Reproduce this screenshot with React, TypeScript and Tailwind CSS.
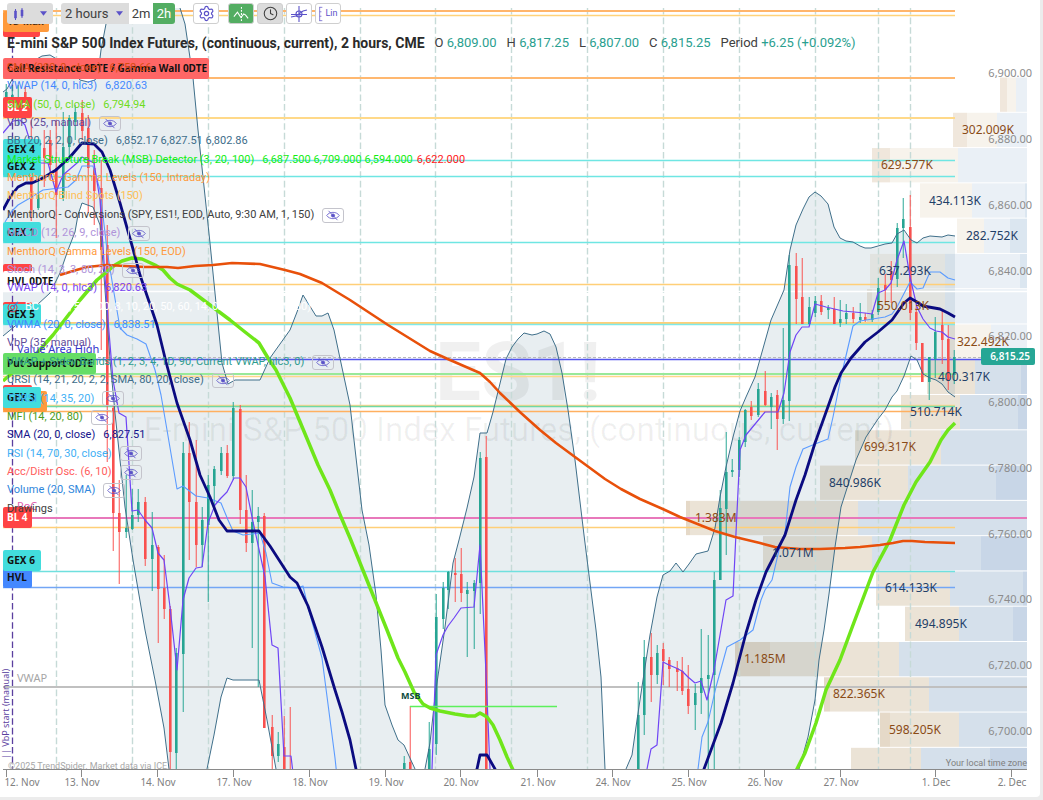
import { clsx } from "clsx"
import { Clock, Settings } from "lucide-react"

type Point = [number, number]
type Candle = [x: number, high: number, low: number, top: number, bottom: number, up: 0 | 1]
type Tag = { text: string, y: number, w: number, fill: string, color?: string }
type Row = { name: string, color: string, values?: string, last?: string, hidden?: boolean, target?: boolean }

const LEGEND: Row[] = [
    { name: "SMA (200, 0, close)", values: "6,759.66", color: "text-[#d94a10]" },
    { name: "VWAP (14, 0, hlc3)", values: "6,820.63", color: "text-[#4488ff]" },
    { name: "SMA (50, 0, close)", values: "6,794.94", color: "text-[#6fdc1c]" },
    { name: "VbP (25, manual)", color: "text-[#5f4b9b]", hidden: true },
    { name: "BB (20, 2, 2, 0, close)", values: "6,852.17 6,827.51 6,802.86", color: "text-[#3d6d8a]" },
    { name: "Market Structure Break (MSB) Detector (3, 20, 100)", values: "6,687.500 6,709.000 6,594.000", last: "6,622.000", color: "text-[#11ee11]" },
    { name: "MenthorQ - Gamma Levels (150, Intraday)", color: "text-[#ff9a3c]" },
    { name: "MenthorQ Blind Spots (150)", color: "text-[#ffbe55]" },
    { name: "MenthorQ - Conversions (SPY, ES1!, EOD, Auto, 9:30 AM, 1, 150)", color: "text-[#404040]", hidden: true },
    { name: "MACD (12, 26, 9, close)", color: "text-[#b094da]", hidden: true },
    { name: "MenthorQ Gamma Levels (150, EOD)", color: "text-[#ff9a3c]" },
    { name: "Stoch (14, 3, 3, 80, 20)", color: "text-[#b094da]", hidden: true },
    { name: "VWAP (14, 0, hlc3)", values: "6,820.63", color: "text-[#7a44f0]" },
    { name: "BC (5, 20, 50, 200, 8, 10, 20, 50, 60, 14, 0.8, 5, 14, 70, 30, 30)", color: "text-white", target: true },
    { name: "VWMA (20, 0, close)", values: "6,838.51", color: "text-[#4488ff]" },
    { name: "VbP (35, manual)", color: "text-[#5f4b9b]" },
    { name: "VWAP + Stdev Bands (1, 2, 3, 4, 1D, 90, Current VWAP, hlc3, 0)", color: "text-[#2f9c8e]", hidden: true },
    { name: "URSI (14, 21, 20, 2, 2, SMA, 80, 20, close)", color: "text-[#3d6d8a]", hidden: true },
    { name: "TDRSI (14, 35, 20)", color: "text-[#3fb0f5]", hidden: true },
    { name: "MFI (14, 20, 80)", color: "text-[#4d9c1c]", hidden: true },
    { name: "SMA (20, 0, close)", values: "6,827.51", color: "text-[#14148c]" },
    { name: "RSI (14, 70, 30, close)", color: "text-[#3fb0f5]", hidden: true },
    { name: "Acc/Distr Osc. (6, 10)", color: "text-[#ff5c5c]", hidden: true },
    { name: "Volume (20, SMA)", color: "text-[#2f86dc]", hidden: true },
    { name: "Drawings", color: "text-[#404040]" },
]

const QUOTE = [
    ["O", "6,809.00"],
    ["H", "6,817.25"],
    ["L", "6,807.00"],
    ["C", "6,815.25"],
    ["Period", "+6.25 (+0.092%)"],
]

const TAGS: Tag[] = [
    { text: "", y: 16, w: 37, fill: "#ff4444" },
    { text: "1D Max", y: 11, w: 46, fill: "#ff9a3c", color: "#553010" },
    { text: "Call Resistance 0DTE / Gamma Wall 0DTE", y: 58, w: 206, fill: "#ff6666" },
    { text: "BL 2", y: 97, w: 29, fill: "#ff4444", color: "#ffffff" },
    { text: "GEX 4", y: 139, w: 38, fill: "#42dddd" },
    { text: "GEX 2", y: 156, w: 38, fill: "#42dddd" },
    { text: "GEX 1", y: 222, w: 38, fill: "#42dddd" },
    { text: "", y: 264, w: 29, fill: "#ff4444" },
    { text: "HVL 0DTE", y: 271, w: 51, fill: "#ffffff" },
    { text: "", y: 302, w: 29, fill: "#ff4444" },
    { text: "GEX 5", y: 304, w: 38, fill: "#42dddd" },
    { text: "Put Support 0DTE", y: 353, w: 93, fill: "#66dd66" },
    { text: "", y: 385, w: 29, fill: "#ff4444" },
    { text: "", y: 391, w: 44, fill: "#ff9a3c" },
    { text: "GEX 3", y: 387, w: 38, fill: "#42dddd" },
    { text: "BL 4", y: 507, w: 29, fill: "#ff4444", color: "#ffffff" },
    { text: "HVL", y: 567, w: 29, fill: "#4488ff" },
    { text: "GEX 6", y: 550, w: 38, fill: "#42dddd" },
]

// [y, colour, thickness, right end]
const LEVELS: [number, string, number, number][] = [
    [11, "#ffb56b", 2, 955], [15, "#ffd37a", 1, 955], [78, "#ffb870", 2, 955], [118, "#ffd989", 2, 955],
    [160, "#6fe6e3", 1, 955], [176, "#6fe6e3", 1, 955], [242, "#6fe6e3", 1, 955], [284, "#ffcf78", 1, 955],
    [291, "#ffffff", 1, 1027], [323, "#ffcf78", 2, 955], [324, "#7fe9e9", 1, 955], [359, "#5555ee", 1, 981],
    [374, "#98e99a", 2, 955], [376, "#ffd68c", 1, 955], [405, "#ffd68c", 1, 955], [406, "#70d8a4", 1, 955],
    [411, "#ffb060", 1, 955], [518, "#e878bb", 2, 1027], [527, "#ffcf78", 1, 955], [571, "#6fe0de", 1, 955],
    [587, "#73a6f5", 1, 955], [687, "#c0c0c0", 2, 1027],
]

const SESSIONS = [56, 132, 208, 284, 360, 435, 511, 587, 663, 739, 815, 878, 910]

// volume by price rows, top to bottom: [left edge, colour][]
const BL = "#f7f3ec", BD = "#f0e7dc", UL = "#eaf0f6", UD = "#dbe6f0"
const SL = "#ebe3d6", SD = "#e5d9c8", CL = "#d5e0eb", CD = "#c8d6e7"
const PROFILE: [number, string][][] = [
    [[1000, BD], [1007, BL], [1016, UL]],
    [[953, BD], [967, BL], [997, UL]],
    [[872, BD], [890, BL], [958, UL]],
    [[920, BL], [972, UL], [1025, UD]],
    [[957, BL], [984, UL], [1010, UD]],
    [[870, BL], [945, UL], [1020, UD]],
    [[867, BD], [872, BL], [945, UL]],
    [[948, BD], [955, BL], [991, UL]],
    [[927, SL], [975, CL], [1021, CD]],
    [[901, SL], [960, CL], [1018, CD]],
    [[855, SL], [941, CL]],
    [[820, SL], [908, CL], [996, CD]],
    [[686, SD], [690, SL], [858, CL]],
    [[763, SL], [872, CL], [981, CD]],
    [[876, SL], [950, CL], [1023, CD]],
    [[905, SL], [959, CL], [1013, CD]],
    [[735, SD], [770, SL], [899, CL]],
    [[824, SD], [830, SL], [929, CL]],
    [[880, SD], [890, SL], [959, CL]],
    [[851, SL], [921, CL], [990, CD]],
]

const VOLUMES: [number, number, string, 0 | 1][] = [
    [962, 130, "302.009K", 0], [881, 165, "629.577K", 0], [929, 201, "434.113K", 1], [966, 236, "282.752K", 1],
    [879, 271, "637.293K", 1], [877, 306, "550.013K", 0], [957, 342, "322.492K", 0], [938, 377, "400.317K", 1],
    [910, 412, "510.714K", 1], [864, 447, "699.317K", 0], [829, 483, "840.986K", 1], [695, 518, "1.383M", 0],
    [772, 553, "1.071M", 1], [885, 588, "614.133K", 1], [915, 624, "494.895K", 1], [744, 659, "1.185M", 0],
    [833, 694, "822.365K", 0], [889, 730, "598.205K", 0],
]

const PRICES: [number, string][] = [
    [73, "6,900.00"], [139, "6,880.00"], [205, "6,860.00"], [271, "6,840.00"], [336, "6,820.00"], [402, "6,800.00"],
    [468, "6,780.00"], [534, "6,760.00"], [599, "6,740.00"], [665, "6,720.00"], [731, "6,700.00"],
]

const DATES: [number, string][] = [
    [6, "12. Nov"], [81, "13. Nov"], [157, "14. Nov"], [233, "17. Nov"], [309, "18. Nov"], [385, "19. Nov"], [460, "20. Nov"],
    [537, "21. Nov"], [612, "24. Nov"], [688, "25. Nov"], [764, "26. Nov"], [840, "27. Nov"], [935, "1. Dec"], [1011, "2. Dec"],
]

const UPPER: Point[] = [
    [3, 92], [7, 89], [14, 76], [24, 66], [35, 60], [42, 56], [50, 55], [55, 58], [68, 66], [80, 80], [88, 82], [95, 80], [98, 74],
    [101, 50], [106, 24], [110, -10], [174, -10], [180, 8], [185, 24], [193, 78], [198, 130], [210, 243], [222, 363], [228, 384],
    [235, 380], [260, 380], [270, 358], [290, 330], [297, 312], [303, 295], [316, 316], [322, 316], [328, 313], [334, 330],
    [341, 363], [350, 405], [354, 440], [362, 510], [369, 545], [376, 595], [381, 650], [385, 705], [392, 725], [398, 740], [404, 745],
    [415, 769], [420, 800], [425, 769], [430, 743], [435, 697], [445, 627], [453, 563], [459, 540], [467, 508], [474, 477], [480, 433], [487, 433],
    [493, 412], [506, 359], [512, 347], [518, 339], [524, 333], [532, 335], [537, 334], [544, 331], [550, 334], [556, 347],
    [562, 373], [568, 410], [575, 460], [584, 535], [590, 583], [596, 630], [601, 677], [605, 769], [612, 850], [618, 850],
    [626, 769], [632, 755], [637, 720], [643, 680], [650, 635], [657, 597], [663, 575], [670, 571], [676, 563], [683, 572],
    [689, 564], [696, 554], [708, 551], [715, 528], [720, 497], [726, 467], [733, 437], [740, 411], [746, 397], [755, 377],
    [771, 320], [784, 290], [790, 250], [796, 225], [803, 209], [809, 197], [815, 192], [821, 196], [828, 204], [834, 227],
    [840, 238], [846, 241], [853, 242], [860, 246], [865, 248], [871, 248], [885, 244], [892, 243], [897, 234], [904, 230],
    [911, 240], [917, 243], [923, 238], [930, 236], [942, 237], [948, 235], [955, 236],
]

const LOWER: Point[] = [
    [3, 336], [20, 322], [37, 305], [50, 293], [60, 273], [68, 250], [75, 232], [78, 215], [82, 203], [93, 207], [100, 225],
    [105, 290], [110, 360], [115, 413], [125, 507], [133, 560], [145, 630], [155, 680], [164, 728], [169, 769], [180, 900],
    [190, 900], [207, 769], [214, 735], [221, 697], [227, 678], [233, 680], [259, 680], [267, 720], [276, 769], [300, 900],
    [770, 900], [799, 769], [808, 737], [815, 700], [819, 660], [824, 630], [829, 594], [835, 547], [841, 507], [856, 460],
    [866, 437], [878, 419], [885, 410], [892, 397], [897, 391], [904, 376], [911, 356], [917, 360], [923, 374], [930, 378],
    [936, 380], [942, 384], [948, 392], [955, 397],
]

const SMA50: Point[] = [
    [3, 381], [20, 366], [37, 353], [53, 335], [80, 300], [97, 280], [115, 265], [122, 261], [132, 258], [142, 259], [155, 265],
    [163, 270], [170, 278], [177, 284], [190, 290], [210, 305], [230, 320], [245, 332], [259, 343], [268, 358], [276, 370],
    [290, 398], [303, 429], [318, 465], [330, 490], [341, 517], [350, 538], [387, 630], [398, 658], [405, 672], [414, 692],
    [423, 704], [430, 708], [440, 711], [455, 714], [468, 716], [475, 716], [480, 713], [487, 717], [493, 725], [500, 740],
    [507, 757], [520, 785], [600, 900], [720, 900], [790, 785], [797, 769], [805, 753], [816, 723], [826, 690], [840, 660], [853, 625],
    [873, 572], [890, 540], [904, 505], [916, 482], [930, 462], [941, 440], [948, 430], [955, 423],
]

const SMA200: Point[] = [
    [60, 275], [73, 271], [87, 267], [107, 265], [125, 266], [145, 267], [167, 267], [178, 268], [195, 266], [213, 265],
    [232, 263], [260, 264], [285, 270], [300, 274], [322, 283], [350, 300], [388, 325], [430, 351], [450, 360], [480, 373],
    [490, 382], [500, 393], [521, 413], [540, 430], [556, 443], [575, 457], [590, 468], [605, 479], [621, 489], [640, 499],
    [665, 510], [680, 517], [700, 525], [715, 531], [735, 537], [760, 543], [775, 547], [800, 549], [820, 549], [845, 548],
    [860, 547], [880, 545], [893, 543], [903, 541], [912, 541], [925, 542], [955, 543],
]

const SMA20: Point[] = [
    [3, 210], [10, 197], [18, 187], [26, 183], [32, 183], [43, 178], [56, 170], [70, 157], [82, 143], [94, 144], [102, 152],
    [110, 170], [120, 203], [133, 249], [140, 275], [157, 325], [166, 362], [177, 403], [190, 440], [200, 475], [210, 497],
    [219, 520], [227, 531], [259, 531], [270, 546], [290, 577], [297, 583], [308, 606], [322, 647], [335, 690],
    [342, 712], [350, 740], [356, 769], [370, 830], [460, 830], [477, 769], [480, 755], [487, 755], [495, 769], [520, 830],
    [680, 830], [704, 769], [721, 723], [733, 683], [746, 633], [756, 600], [766, 572], [785, 535], [796, 500], [805, 475],
    [815, 443], [835, 387], [841, 373], [851, 358], [865, 342], [878, 332], [892, 320], [904, 303], [910, 298],
    [917, 302], [923, 306], [940, 309], [948, 313], [955, 317],
]

const VWAP: Point[] = [
    [3, 133], [13, 121], [20, 120], [25, 125], [29, 138], [33, 163], [48, 163], [56, 192], [63, 175], [77, 163], [82, 157],
    [94, 163], [100, 200], [104, 262], [108, 320], [113, 380], [119, 413], [126, 417], [132, 511], [138, 510], [145, 520],
    [152, 528], [158, 553], [164, 560], [170, 607], [177, 670], [183, 600], [189, 578], [196, 568], [202, 567], [208, 523],
    [215, 505], [221, 498], [227, 492], [234, 478], [240, 478], [246, 487], [252, 517], [265, 577], [272, 645], [278, 648],
    [284, 756], [291, 756], [295, 790], [430, 850], [432, 769], [436, 655], [443, 635], [448, 626], [454, 618], [461, 608],
    [474, 607], [480, 545], [486, 673], [490, 769], [495, 850], [640, 850], [647, 769], [651, 749], [657, 745], [663, 662],
    [669, 665], [676, 668], [682, 671], [688, 677], [695, 683], [701, 681], [707, 700], [714, 670], [726, 600], [733, 596],
    [736, 533], [740, 450], [746, 435], [765, 412], [778, 412], [784, 393], [790, 352], [796, 335], [802, 327], [809, 327],
    [815, 304], [826, 307], [843, 311], [865, 313], [872, 314], [878, 293], [885, 290], [891, 283], [897, 260], [904, 241],
    [910, 277], [917, 307], [923, 319], [930, 328], [936, 331], [942, 332], [948, 337], [955, 339],
]

const VWMA: Point[] = [
    [5, 222], [12, 211], [18, 205], [30, 198], [43, 190], [68, 187], [76, 180], [82, 166], [93, 166], [100, 190], [107, 250],
    [113, 287], [120, 328], [127, 335], [137, 339], [146, 344], [155, 370], [161, 395], [167, 430], [177, 489], [183, 486],
    [196, 496], [208, 498], [221, 503], [228, 520], [233, 531], [243, 535], [260, 533], [266, 553], [272, 583], [283, 587],
    [297, 588], [303, 586], [308, 607], [322, 658], [335, 758], [345, 850], [690, 850], [698, 769], [702, 737], [708, 722],
    [716, 687], [727, 647], [740, 640], [753, 630], [761, 600], [765, 590], [772, 580], [779, 550], [785, 533], [790, 487],
    [796, 467], [803, 449], [815, 444], [828, 439], [833, 417], [841, 377], [853, 326], [860, 321], [885, 317], [892, 314],
    [897, 307], [910, 282], [917, 289], [923, 288], [930, 272], [940, 272], [948, 278], [955, 280],
]

const CANDLES: Candle[] = [
    [6, 84, 112, 92, 108, 1], [12, 86, 116, 95, 112, 1], [18, 85, 125, 100, 118, 1], [25, 86, 120, 92, 115, 0],
    [31, 120, 221, 150, 210, 0], [38, 150, 210, 195, 208, 1], [44, 130, 187, 148, 158, 0], [50, 130, 180, 140, 165, 0],
    [56, 120, 238, 168, 195, 0], [63, 112, 201, 147, 198, 1], [69, 115, 157, 118, 147, 1], [75, 105, 140, 112, 122, 1],
    [82, 100, 140, 113, 131, 0], [88, 115, 213, 128, 168, 0], [94, 150, 225, 168, 191, 0], [101, 160, 350, 188, 250, 0],
    [107, 225, 462, 245, 405, 0], [113, 405, 551, 408, 513, 0], [119, 480, 584, 513, 532, 0], [126, 475, 538, 528, 532, 1],
    [132, 489, 530, 515, 529, 1], [138, 489, 522, 502, 515, 1], [145, 497, 566, 502, 559, 0], [152, 512, 591, 545, 559, 1],
    [158, 545, 643, 547, 589, 0], [164, 555, 619, 588, 609, 0], [170, 606, 769, 609, 752, 0], [176, 648, 769, 653, 753, 1],
    [183, 442, 712, 453, 654, 1], [189, 422, 560, 453, 502, 0], [196, 440, 567, 502, 545, 0], [202, 507, 567, 520, 545, 1],
    [208, 475, 602, 485, 525, 1], [214, 466, 505, 469, 486, 1], [221, 447, 475, 453, 471, 1], [227, 445, 478, 453, 476, 0],
    [233, 402, 480, 408, 476, 1], [240, 405, 524, 409, 510, 0], [246, 475, 552, 510, 543, 0], [252, 490, 648, 522, 543, 1],
    [258, 507, 687, 516, 522, 1], [264, 513, 728, 516, 728, 0], [272, 715, 769, 727, 756, 0], [278, 732, 762, 744, 756, 1],
    [284, 716, 769, 747, 769, 0], [290, 707, 769, 769, 769, 0], [404, 756, 769, 763, 769, 1], [410, 706, 769, 762, 769, 0],
    [429, 722, 769, 749, 769, 1], [436, 594, 755, 617, 744, 1], [443, 582, 629, 588, 619, 1], [448, 571, 609, 572, 590, 1],
    [455, 558, 602, 573, 575, 0], [461, 548, 602, 574, 593, 0], [467, 582, 657, 590, 594, 1], [474, 580, 649, 583, 591, 1],
    [480, 452, 614, 458, 583, 1], [486, 436, 769, 457, 769, 0], [638, 682, 769, 715, 769, 1], [644, 640, 735, 657, 715, 1],
    [651, 633, 702, 657, 675, 0], [657, 645, 684, 653, 675, 1], [663, 643, 685, 649, 661, 0], [669, 657, 687, 660, 669, 0],
    [677, 661, 691, 668, 672, 0], [682, 657, 695, 671, 691, 0], [688, 665, 714, 689, 706, 0], [695, 684, 730, 693, 705, 1],
    [701, 629, 714, 678, 693, 1], [708, 635, 769, 675, 679, 1], [714, 572, 769, 580, 675, 1], [720, 490, 580, 508, 580, 1],
    [726, 432, 555, 472, 509, 1], [732, 459, 477, 470, 472, 1], [739, 437, 477, 440, 470, 1], [745, 409, 447, 410, 442, 1],
    [751, 401, 420, 407, 416, 0], [758, 383, 417, 389, 415, 1], [765, 371, 406, 391, 405, 0], [771, 393, 429, 397, 407, 1],
    [777, 390, 450, 395, 419, 0], [783, 328, 424, 400, 419, 1], [789, 255, 421, 265, 401, 1], [796, 253, 324, 266, 299, 0],
    [802, 258, 324, 297, 324, 0], [809, 297, 325, 307, 324, 1], [815, 296, 317, 301, 313, 1], [821, 295, 315, 301, 312, 0],
    [828, 305, 319, 308, 310, 1], [834, 297, 323, 309, 324, 0], [840, 300, 327, 319, 323, 1], [846, 304, 324, 313, 319, 1],
    [853, 307, 323, 313, 319, 0], [860, 303, 323, 317, 320, 1], [865, 313, 322, 317, 320, 0], [872, 310, 322, 314, 320, 1],
    [878, 278, 315, 288, 312, 1], [885, 274, 302, 285, 290, 0], [891, 261, 303, 271, 280, 0], [897, 223, 287, 228, 279, 1],
    [903, 198, 258, 219, 228, 1], [910, 195, 320, 227, 313, 0], [916, 303, 350, 312, 343, 0], [922, 343, 382, 343, 382, 0],
    [929, 357, 400, 357, 382, 1], [935, 317, 378, 332, 359, 1], [942, 311, 364, 325, 340, 0], [948, 325, 390, 339, 381, 0],
    [954, 350, 384, 357, 375, 1],
]

const pts = (list: Point[]) => list.map(p => p.join(",")).join(" ")

function Line({ data, color, width }: { data: Point[], color: string, width: number }) {
    return <polyline points={pts(data)} fill="none" stroke={color} strokeWidth={width} strokeLinejoin="round" />
}

function Chart() {
    return <svg viewBox="0 0 1040 797" className="block h-auto w-full font-['Noto_Sans',sans-serif] [grid-area:1/1]" role="img" aria-label="ES1! price chart">
        <defs>
            <clipPath id="plot"><rect x="3" y="8" width="1024" height="761" /></clipPath>
        </defs>

        <g clipPath="url(#plot)">
            {PROFILE.map((row, i) => row.map(([x, fill], j) => (
                <rect key={`${i}-${j}`} x={x} y={77.5 + i * 35.28} width={(row[j + 1]?.[0] ?? 1027) - x} height="34.3" fill={fill} />
            )))}
            <polygon points={`${pts(UPPER)} ${pts([...LOWER].reverse())}`} fill="#44758f" fillOpacity="0.12" />
        </g>

        <g fill="#000000" fillOpacity="0.06" textAnchor="middle" className="font-[Roboto,sans-serif]">
            <text x="518" y="400" fontSize="82" fontWeight="700">ES1!</text>
            <text x="519" y="441" fontSize="33">E-mini S&amp;P 500 Index Futures, (continuous, current)</text>
        </g>

        {SESSIONS.map(x => <path key={x} d={`M${x + 0.5} 8V769`} stroke="#c6dad7" strokeWidth="1.4" strokeDasharray="6.6 3" />)}
        <path d="M12.5 27V769" stroke="#5b3f9f" strokeWidth="1.3" strokeDasharray="6.6 3" />

        {LEVELS.map(([y, color, w, end]) => <path key={`${y}${color}`} d={`M3 ${w === 1 ? y + 0.5 : y}H${end}`} stroke={color} strokeWidth={w === 1 ? 1.5 : 1.8} />)}
        <path d="M3 357.5H981" stroke="#b9b9b9" strokeDasharray="3 2" />

        <g clipPath="url(#plot)">
            {CANDLES.map(([x, high, low, top, bottom, up]) => {
                const color = up ? "#26a593" : "#f9514f"
                return <g key={x} stroke={color}>
                    <path d={`M${x + 0.3} ${high}V${low}`} strokeWidth="1.3" strokeOpacity="0.75" />
                    <path d={`M${x + 0.3} ${top}V${bottom}`} strokeWidth="2.6" />
                </g>
            })}
            <Line data={UPPER} color="#3f6f8a" width={1} />
            <Line data={LOWER} color="#3f6f8a" width={1} />
            <Line data={VWMA} color="#5b9bff" width={1.1} />
            <Line data={VWAP} color="#6f45f5" width={1.2} />
            <path d="M410 706.5H557" stroke="#5cf05c" strokeWidth="1.5" />
            <Line data={SMA50} color="#6fe61a" width={3.5} />
            <Line data={SMA200} color="#e8500a" width={2.6} />
            <Line data={SMA20} color="#0b0b80" width={2.8} />
        </g>

        <g fontSize="12">
            {VOLUMES.map(([x, y, text, blue]) => <text key={text} x={x} y={y + 4} fill={blue ? "#1f4068" : "#8a4b17"}>{text}</text>)}
        </g>
        <text x="401" y="699" fontSize="9" fontWeight="700" fill="#0b4a3c">MSB</text>

        <path d="M3 769.5H1027" stroke="#8a8a8a" />
        <g fontSize="10" fill="#808080" textAnchor="middle">
            {DATES.map(([x, text]) => <g key={text}>
                <path d={`M${x + 0.5} 769V777`} stroke="#8a8a8a" />
                <text x={x === 6 ? 22 : x + 1} y="786">{text}</text>
            </g>)}
        </g>
        <g fontSize="11" fill="#8c8c8c" textAnchor="end">
            {PRICES.map(([y, text]) => <text key={y} x="1032" y={y + 4}>{text}</text>)}
        </g>
        <rect x="981" y="348" width="54" height="17" rx="2" fill="#26a695" />
        <text x="1030" y="360" fontSize="10" fontWeight="600" fill="#ffffff" textAnchor="end">6,815.25</text>

        <g fontSize="9" className="font-[Roboto,sans-serif]">
            <text x="8" y="769" fill="#a8a8a8">©2025 TrendSpider. Market data via ICE.</text>
            <text x="1027" y="766" fill="#808080" textAnchor="end">Your local time zone</text>
        </g>
        <g fontSize="11">
            <text x="17" y="682" fill="#a6a6a6">VWAP</text>
            <text x="17" y="353" fill="#3333cc">Value Area High</text>
            <text x="17" y="510" fill="#e060b0">PoC</text>
        </g>
        <text transform="translate(9 759) rotate(-90)" fontSize="9" fill="#5b3f9f">|| VbP start (manual)</text>

        <g fontSize="10" fontWeight="700">
            {TAGS.map(({ text, y, w, fill, color }) => <g key={`${text}${y}`}>
                <rect x="3" y={y} width={w} height="21" rx="2" fill={fill} />
                <text x="7" y={y + 14} fill={color ?? "#111111"}>{text}</text>
            </g>)}
        </g>
    </svg>
}

function CandleIcon() {
    return <svg viewBox="0 0 12 14" className="h-3.5 w-3" fill="#5b52c8" stroke="#5b52c8">
        <path d="M2.5 2v11M9 1v10" />
        <path d="M1.5 4h2v7h-2zM8 3h2v6H8z" strokeWidth="0.6" />
    </svg>
}

function ZigzagIcon() {
    return <svg viewBox="0 0 18 18" className="size-4" fill="none" stroke="#ffffff" strokeWidth="1.2">
        <path d="M1 12l4-5 4 6 3-4 2 1 3 4" />
        <path d="M9.5 1v16" strokeDasharray="2 1.5" />
    </svg>
}

function CrosshairIcon() {
    return <svg viewBox="0 0 18 18" className="size-[18px]" fill="none" stroke="#5b52c8" strokeWidth="1.1">
        <path d="M9 1v16M1 9.5h16M1 12l5-1 7-5 4-1" />
        <circle cx="9" cy="9" r="3" />
    </svg>
}

function ScaleIcon() {
    return <svg viewBox="0 0 6 18" className="h-4 w-1.5" fill="none" stroke="#5b52c8">
        <path d="M1.5 1v16M1.5 1.5h3M1.5 6.5h2M1.5 11.5h2M1.5 16.5h3" strokeWidth="0.8" />
    </svg>
}

function HiddenIcon() {
    return <svg viewBox="0 0 14 11" className="h-[11px] w-[14px]" fill="none" stroke="#5b52c8" strokeWidth="0.8">
        <path d="M0.7 5.5C3.5 1.3 10.5 1.3 13.3 5.5C10.5 9.7 3.5 9.7 0.7 5.5Z" />
        <circle cx="7" cy="5.5" r="1.6" fill="#5b52c8" />
        <path d="M2.5 0.8L11.5 10.2" />
    </svg>
}

function Caret() {
    return <svg viewBox="0 0 8 5" className="h-[5px] w-[7px]"><path d="M0 0h8L4 5z" fill="#5b52c8" /></svg>
}

function Target() {
    return <svg viewBox="0 0 12 12" className="mr-1.5 size-3" fill="none">
        <circle cx="5.5" cy="6.5" r="4.5" stroke="#e0304a" />
        <circle cx="5.5" cy="6.5" r="2" stroke="#e0304a" />
        <path d="M6 6l5-5" stroke="#3a7fd5" strokeWidth="1.2" />
    </svg>
}

function Toolbar() {
    const tool = "flex h-[21px] w-[26px] items-center justify-center rounded-[3px] border border-[#cfcfcf]"
    return <div className="flex h-[21px] items-center text-[13px] text-[#404040]">
        <button aria-label="Chart type" className="flex h-full w-[46px] items-center justify-between rounded-[3px] bg-[#dcdcdc] px-1.5">
            <CandleIcon />
            <Caret />
        </button>
        <div className="ml-2 flex h-full w-[114px] overflow-hidden rounded-[3px]">
            <button className="flex w-[68px] items-center justify-between bg-[#dcdcdc] pr-1.5 pl-1">2 hours <Caret /></button>
            <button className="w-6 bg-white">2m</button>
            <button className="w-[22px] bg-[#53ad62] text-white">2h</button>
        </div>
        <button aria-label="Settings" className={clsx(tool, "ml-[18px] bg-white text-[#5b52c8]")}><Settings size={17} strokeWidth={1.7} /></button>
        <button aria-label="Indicators" className={clsx(tool, "ml-[9px] border-[#3f9a50] bg-[#53ad62]")}><ZigzagIcon /></button>
        <button aria-label="Time" className={clsx(tool, "ml-[3px] bg-[#dcdcdc]")}><Clock size={15} strokeWidth={1.7} /></button>
        <button aria-label="Crosshair" className={clsx(tool, "ml-[3px] bg-white")}><CrosshairIcon /></button>
        <button aria-label="Linear scale" className={clsx(tool, "ml-[3px] gap-px bg-white text-[9px] text-[#5b52c8]")}><ScaleIcon />Lin</button>
    </div>
}

function LegendRow({ row }: { row: Row }) {
    return <li className={clsx("flex h-[18px] items-center whitespace-pre", row.color)}>
        {row.target && <Target />}
        <span>{row.name}</span>
        {row.values && <span className="ml-2">{row.values}</span>}
        {row.last && <span className="ml-1 text-[#ff1a1a]">{row.last}</span>}
        {row.hidden && <button aria-label={`Show ${row.name}`} className="ml-2 flex h-[15px] w-[22px] items-center justify-center rounded-[3px] border border-[#c4c4cc]">
            <HiddenIcon />
        </button>}
    </li>
}

function App() {
    return <main className="min-h-screen bg-[#ececec] pr-[3px] pb-[3px] font-[Roboto,sans-serif]">
        <div className="grid overflow-hidden rounded-br-[4px] bg-white">
            <Chart />
            <div className="z-10 flex flex-col items-start pt-[3px] pl-[7px] [grid-area:1/1]">
                <Toolbar />
                <h1 className="mt-[10px] flex h-[18px] items-center gap-2.5 text-[13px] whitespace-nowrap text-[#404040]">
                    <span className="text-sm font-bold text-[#2a2a2a]">E-mini S&amp;P 500 Index Futures, (continuous, current), 2 hours, CME</span>
                    {QUOTE.map(([label, value]) => (
                        <span key={label}>{label} <span className="text-[#2aa08f]">{value}</span></span>
                    ))}
                </h1>
                <ul className="mt-[7px] flex h-[459px] flex-col justify-between text-[11px]">
                    {LEGEND.map((row, i) => <LegendRow key={i} row={row} />)}
                </ul>
            </div>
        </div>
    </main>
}; export default App
